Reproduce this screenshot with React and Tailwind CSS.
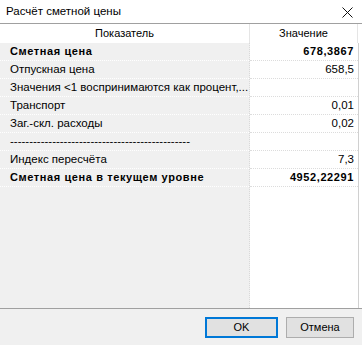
import React from 'react';

const rows = [
  { label: 'Сметная цена', value: '678,3867', bold: true },
  { label: 'Отпускная цена', value: '658,5' },
  { label: 'Значения <1 воспринимаются как процент,...', value: '' },
  { label: 'Транспорт', value: '0,01' },
  { label: 'Заг.-скл. расходы', value: '0,02' },
  { label: '-----------------------------------------------', value: '' },
  { label: 'Индекс пересчёта', value: '7,3' },
  { label: 'Сметная цена в текущем уровне', value: '4952,22291', bold: true },
];

const App = () => {
  return (
    <div className="w-[362px] h-[345px] bg-[#f0f0f0] flex flex-col text-black font-['Liberation_Sans',Arial,sans-serif] overflow-hidden">
      {/* Заголовок окна */}
      <div className="h-[23px] bg-white flex items-center justify-between pl-[6px] pr-[9px] shrink-0">
        <span className="text-[11.5px] leading-none">Расчёт сметной цены</span>
        <svg width="11" height="11" viewBox="0 0 11 11" className="mt-[1px]">
          <path d="M0.5 0.5L10.5 10.5M10.5 0.5L0.5 10.5" stroke="#111" strokeWidth="1" />
        </svg>
      </div>

      {/* Таблица */}
      <div className="flex-1 flex flex-col border-t border-b border-[#a0a0a0] bg-white w-[362px]">
        <div className="flex h-[19px] text-[11px] shrink-0">
          <div className="w-[250px] flex items-center justify-center border-r border-[#e5e5e5]">Показатель</div>
          <div className="w-[108px] flex items-center justify-center border-r border-[#e5e5e5]">Значение</div>
        </div>
        <div className="flex-1 flex">
          <div className="w-[250px] bg-[#f0f0f0] border-r border-dotted border-[#d9d9d9] flex flex-col">
            {rows.map((r, i) => (
              <div
                key={i}
                className={`h-[18px] flex items-center pl-[10px] pr-[2px] border-b border-dotted border-white whitespace-nowrap overflow-hidden ${r.bold ? 'font-bold text-[11px] tracking-[0.6px]' : 'text-[11.5px]'}`}
              >
                {r.label}
              </div>
            ))}
          </div>
          <div className="w-[109px] flex flex-col border-r border-[#d0d0d0]">
            {rows.map((r, i) => (
              <div
                key={i}
                className={`h-[18px] flex items-center justify-end pr-[4px] border-b border-dotted border-[#dcdcdc] ${r.bold ? 'font-bold text-[11px] tracking-[0.6px]' : 'text-[11.5px]'}`}
              >
                {r.value}
              </div>
            ))}
          </div>
        </div>
      </div>

      {/* Кнопки */}
      <div className="h-[36px] flex items-center justify-end gap-[8px] pr-[8px] shrink-0">
        <button className="w-[73px] h-[21px] border-2 border-[#0078d7] bg-[#e1e1e1] text-[11px] leading-none">OK</button>
        <button className="w-[68px] h-[21px] border border-[#adadad] bg-[#e1e1e1] text-[11px] leading-none">Отмена</button>
      </div>
    </div>
  );
};

export default App;
